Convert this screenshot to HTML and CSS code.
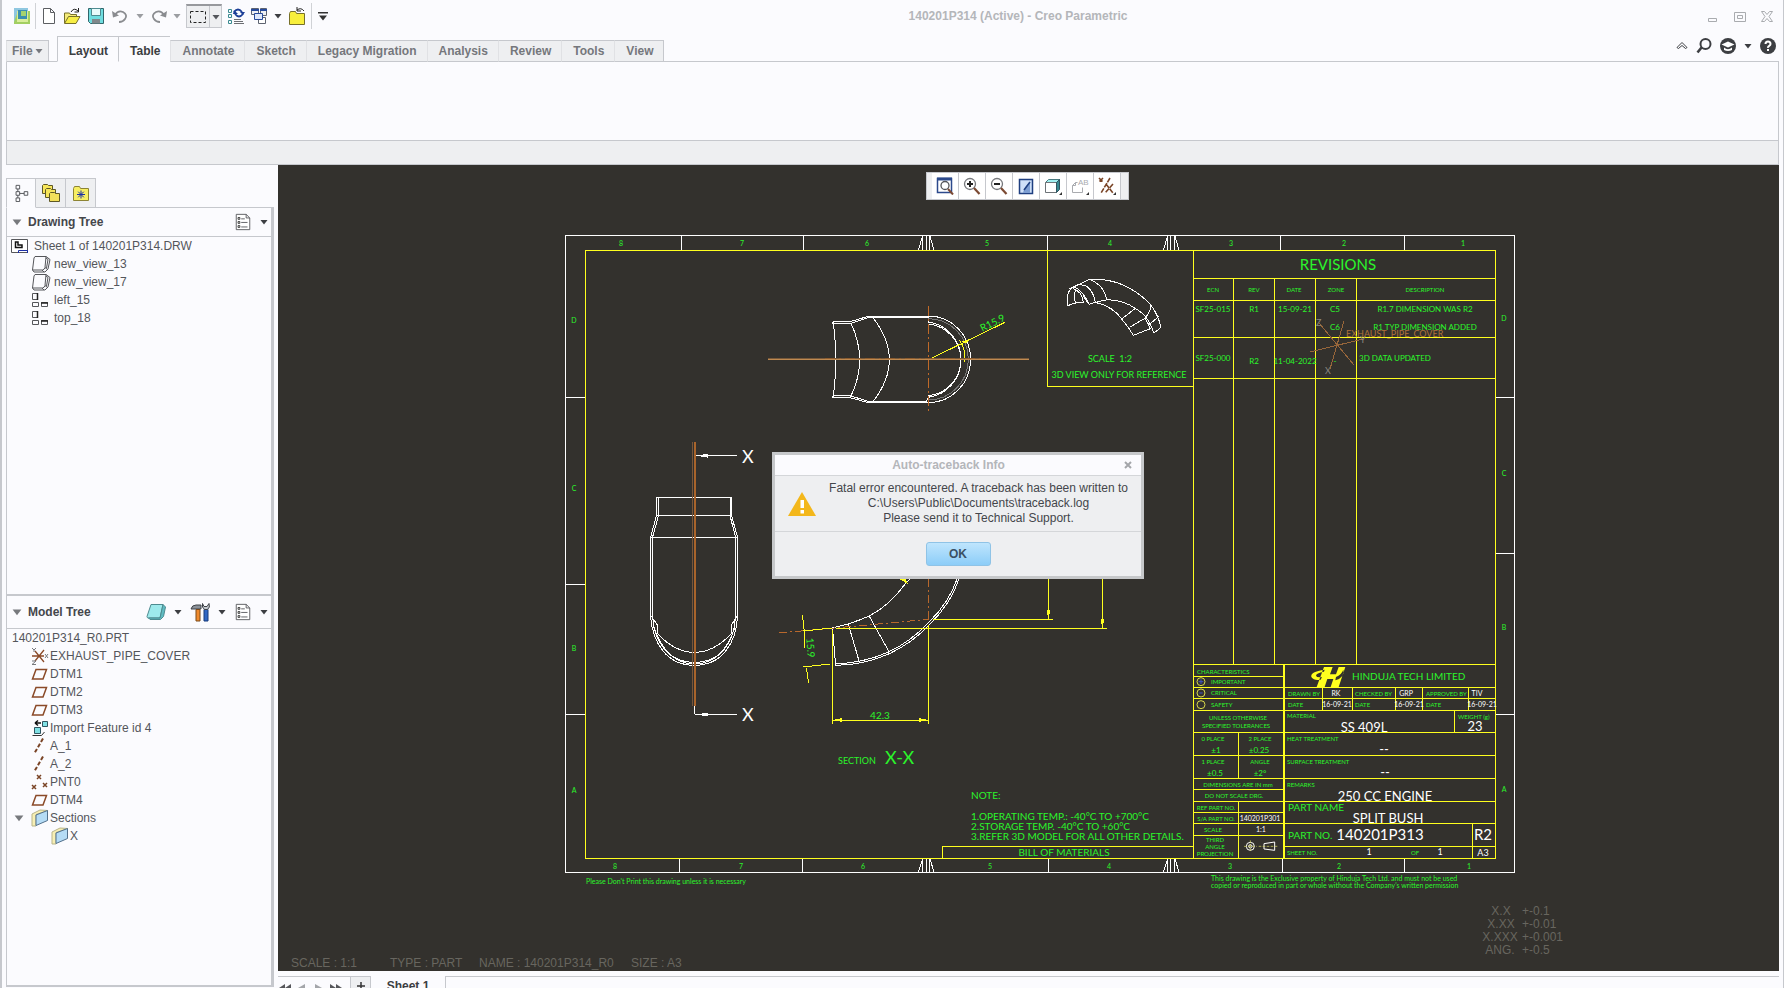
FILE: index.html
```html
<!DOCTYPE html>
<html lang="en">
<head>
<meta charset="utf-8">
<title>140201P314 (Active) - Creo Parametric</title>
<link rel="stylesheet" href="styles.css">
</head>
<body>
<svg class="defs" aria-hidden="true">
  <defs>
    <symbol id="caret" viewBox="0 0 8 8"><path d="M0.500 2h7L4 6.500z" fill="currentColor"/></symbol>
    <symbol id="plane" viewBox="0 0 18 18"><path d="M5 4.500h10.500L12 14H1.500z" fill="none" stroke="#8a4a28" stroke-width="1.500"/></symbol>
    <symbol id="axis" viewBox="0 0 18 18"><path d="M12 1.500L3 17" fill="none" stroke="#7a4426" stroke-width="2" stroke-dasharray="4 2"/></symbol>
    <symbol id="view3d" viewBox="0 0 20 18"><path d="M4 1.500h11l-1 11q-.5 2-2.500 2.500L1.500 15 3 3zM15 1.500l4 3-2 9.500-3 3H3l-1.500-2M14 12.500l2.500 2M11 15l2 2M15 3l2 1.500-1.500 8.500" fill="none" stroke="#55565a"/></symbol>
    <symbol id="views" viewBox="0 0 18 18"><path d="M1.500 2.500h5v6h-5zM1.500 11.500h6v4h-6zM10.500 11.500h6v4h-6z" fill="none" stroke="#55565a"/><path d="M6.500 2v7M10 12h7" stroke="#222" stroke-width="1.500"/></symbol>
    <symbol id="section" viewBox="0 0 18 18"><path d="M1 5l8-4 8 .5L5 5.500V17H1z" fill="#f7efb4" stroke="#b9b58a"/><path d="M5 6l11.500-4.500v10L5 16.500z" fill="#b5dcf6" stroke="#52708c"/></symbol>
    <symbol id="list" viewBox="0 0 18 20"><path d="M1.500 1.500h11l4 4v13h-15z" fill="#fff" stroke="#55565a"/><path d="M12.500 1.500v4h4M7 6.500h4M7 10.500h7M7 15.500h7" fill="none" stroke="#55565a"/><path d="M3.500 5h2v2h-2zM3.500 9.500h2v2h-2zM3.500 14h2v2h-2z" fill="none" stroke="#333"/></symbol>
    <symbol id="folder" viewBox="0 0 18 18"><path d="M1.500 4.500l1-2h5l1 2h8v12h-15z" fill="#f7ee62" stroke="#8d8434"/></symbol>
    <symbol id="lens" viewBox="0 0 18 18"><circle cx="7" cy="7" r="5.500" fill="#fff" stroke="#77797d" stroke-width="1.300"/><path d="M11 11l5.500 6" stroke="#7c4a33" stroke-width="2.200"/></symbol>
  </defs>
</svg>

<header class="titlebar">
  <div class="quickbar">
    <svg class="i16" viewBox="0 0 16 16"><path d="M0 0h14v14H0z" fill="#8fc7e0"/><path d="M0 14L4 3h12v13H0z" fill="#a3cf62"/><path d="M3 3h11v11H3z" fill="#d9ee9b"/><path d="M4 2h9v9H4z" fill="#3b8fb0"/><path d="M7 3h5v5H7z" fill="#a5d36e"/></svg>
    <span class="sep"></span>
    <button class="ib" aria-label="New"><svg class="i16" viewBox="0 0 16 16"><path d="M2.500.5h7l4 4v11h-11zM9.500.5v4h4" fill="#fff" stroke="#5c5e62"/></svg></button>
    <button class="ib w20" aria-label="Open"><svg class="i18" viewBox="0 0 18 18"><path d="M1.500 16V6h5l1 1.500h6V10" fill="#f5ec7a" stroke="#77702a"/><path d="M1.500 16.500l4-7H17l-4 7z" fill="#f7ee45" stroke="#77702a"/><path d="M8 5q3-5 7-1M15.500 1v4h-4" fill="none" stroke="#222"/></svg></button>
    <button class="ib w18" aria-label="Save"><svg class="i16" viewBox="0 0 16 16"><path d="M.5.5h15v15H2.500l-2-2z" fill="#6fdde0" stroke="#31666b"/><path d="M3.500.5h9v7h-9z" fill="#e8fbfb" stroke="#4e8b90"/><path d="M4 11h8v4.500H4z" fill="#80888b"/></svg></button>
    <button class="ib w20 dim" aria-label="Undo"><svg class="i18" viewBox="0 0 18 18"><path d="M4 8q3-5 8-3 5 3 2 7-2 3-6 3" fill="none" stroke="#8a8c90" stroke-width="1.800"/><path d="M1 4l1 6.500 6-2z" fill="#8a8c90"/></svg></button>
    <button class="ib w10 dim" aria-label="Undo list"><svg class="i8"><use href="#caret"/></svg></button>
    <button class="ib w18 dim" aria-label="Redo"><svg class="i18" viewBox="0 0 18 18"><path d="M14 8q-3-5-8-3-5 3-2 7 2 3 6 3" fill="none" stroke="#8a8c90" stroke-width="1.800"/><path d="M17 4l-1 6.500-6-2z" fill="#8a8c90"/></svg></button>
    <button class="ib w8 dim" aria-label="Redo list"><svg class="i8"><use href="#caret"/></svg></button>
    <button class="selectbox" aria-label="Selection"><svg class="i18" viewBox="0 0 18 18"><path d="M1.500 3.500h15v11h-15z" fill="none" stroke="#222" stroke-dasharray="3 2"/></svg><span class="selcaret"><svg class="i8"><use href="#caret"/></svg></span></button>
    <button class="ib w18" aria-label="Regenerate"><svg class="i18" viewBox="0 0 18 18"><path d="M1.500 2.500h3v3h-3zM1.500 7.500h3v3h-3zM1.500 13.500h3v3h-3z" fill="none" stroke="#3a8a90"/><path d="M7 5q4-5 8 0M16 7q-4 5-8 0" fill="none" stroke="#1d3f97" stroke-width="1.800"/><path d="M13 5h5l-2 3zM6 7h5L7 3z" fill="#1d3f97"/><path d="M7 12.500h7M7 14.500h9M7 16.500h10" stroke="#6c6e73"/></svg></button>
    <button class="ib w18" aria-label="Windows"><svg class="i18" viewBox="0 0 18 18"><path d="M1.500 1.500h7v6h-7zM10.500 1.500h6v7h-6z" fill="#eef0f4" stroke="#5d6370"/><path d="M1 3h8M10 3h7" stroke="#274a9c" stroke-width="2"/><path d="M8.500 10.500h7v6h-7z" fill="#fff" stroke="#5d6370"/><path d="M4.500 6.500h8v6h-8z" fill="#dfe8fa" stroke="#274a9c"/></svg></button>
    <button class="ib w10" aria-label="Window list"><svg class="i8"><use href="#caret"/></svg></button>
    <button class="ib w18" aria-label="Close"><svg class="i18" viewBox="0 0 18 18"><path d="M1.500 6.500l1-2h5l1 2h8v11h-15z" fill="#f8ef3d" stroke="#77702a"/><path d="M9 3q4-3 7 1M9 0v4h4" fill="none" stroke="#222"/></svg></button>
    <span class="sep"></span>
    <button class="ib w12" aria-label="Customize toolbar"><svg class="i10" viewBox="0 0 10 10"><path d="M0 1h10v1.500H0zM1 4.500h8L5 9.500z" fill="#333"/></svg></button>
  </div>
  <h1 class="title">140201P314 (Active) - Creo Parametric</h1>
  <div class="winbtns">
    <button class="ib w12" aria-label="Minimize"><svg class="i12" viewBox="0 0 12 12"><path d="M1.500 8.500h8v3h-8z" fill="none" stroke="#a9abaf"/></svg></button>
    <button class="ib w12" aria-label="Restore"><svg class="i12" viewBox="0 0 12 12"><path d="M.5 2.500h11v9H.5zM3.500 5.500h5v3h-5z" fill="none" stroke="#a9abaf"/></svg></button>
    <button class="ib w12" aria-label="Close window"><svg class="i12" viewBox="0 0 12 12"><path d="M.5 1.500h3L6 4.500l2.500-3h3L8 6.500l3.500 5h-3L6 8.500l-2.500 3h-3L4 6.500z" fill="none" stroke="#a9abaf"/></svg></button>
  </div>
</header>

<div class="tabrow">
  <nav class="tabs">
    <button class="tab file">File<svg class="i8"><use href="#caret"/></svg></button>
    <button class="tab on">Layout</button>
    <button class="tab on">Table</button>
    <button class="tab">Annotate</button>
    <button class="tab">Sketch</button>
    <button class="tab">Legacy Migration</button>
    <button class="tab">Analysis</button>
    <button class="tab">Review</button>
    <button class="tab">Tools</button>
    <button class="tab">View</button>
  </nav>
  <div class="helpers">
    <button class="ib w12" aria-label="Minimize ribbon"><svg class="i12" viewBox="0 0 12 12"><path d="M1 7.500L6 2.500l5 5-1.500 1L6 5.500l-3.500 3z" fill="none" stroke="#3c3e42"/></svg></button>
    <button class="ib w16" aria-label="Search"><svg class="i16" viewBox="0 0 16 16"><circle cx="9.500" cy="6" r="5" fill="none" stroke="#3c3e42" stroke-width="2"/><path d="M5.500 9.500L1.500 14.500" stroke="#3c3e42" stroke-width="2.600"/></svg></button>
    <button class="ib w16" aria-label="Learning"><svg class="i16" viewBox="0 0 16 16"><circle cx="8" cy="8" r="8" fill="#3c3e42"/><path d="M1.500 6.500L8 3.500l6.500 3L8 9.500zM4 9.500q4 3.500 8 0v2.500q-4 2-8 0z" fill="#fff"/></svg></button>
    <button class="ib w8" aria-label="Learning list"><svg class="i8"><use href="#caret"/></svg></button>
    <button class="ib w16" aria-label="Help"><svg class="i16" viewBox="0 0 16 16"><circle cx="8" cy="8" r="8" fill="#3c3e42"/><path d="M5.500 6q0-2.500 2.500-2.500T10.500 6q0 1-1.300 1.800T8 9.800" fill="none" stroke="#fff" stroke-width="2"/><path d="M7 11h2v2H7z" fill="#fff"/></svg></button>
  </div>
</div>
<section class="ribbon"><div class="groups"></div></section>

<main class="work">
  <aside class="side">
    <div class="navtabs">
      <button class="navtab on" aria-label="Tree"><svg class="i18" viewBox="0 0 18 20"><path d="M3.500 1.500h4v4h-4zM3.500 8.500h4v4h-4zM3.500 15.500h4v4h-4zM12.500 8.500h4v4h-4zM5.500 5.500v3M5.500 12.500v3M7.500 10.500h5" fill="none" stroke="#4a4c50"/></svg></button>
      <button class="navtab" aria-label="Folders"><svg class="i20" viewBox="0 0 20 20"><g fill="#f7e65a" stroke="#5e5826"><path d="M1.500 10.500v-8l1-1h4l1 1h4v8z"/><path d="M4.500 14.500v-8l1-1h4l1 1h4v8z"/><path d="M8.500 18.500v-8l1-1h4l1 1h4v8z" fill="#f3e05a"/></g></svg></button>
      <button class="navtab" aria-label="Favorites"><svg class="i18" viewBox="0 0 18 18"><use href="#folder"/><path d="M9 6.500v8M5 10.500h8M6.200 7.700l5.600 5.600M11.800 7.700l-5.600 5.600" stroke="#1c2fa8"/></svg></button>
    </div>
    <section class="pane">
      <header class="panehead"><svg class="i10 tw" viewBox="0 0 8 8"><use href="#caret"/></svg><h2>Drawing Tree</h2>
        <span class="tools"><button class="ib" aria-label="Settings"><svg class="i18"><use href="#list"/></svg></button><button class="ib w10" aria-label="Settings list"><svg class="i8"><use href="#caret"/></svg></button></span>
      </header>
      <ul class="tree drawing">
        <li><svg class="i18" viewBox="0 0 18 16"><path d="M.5 1.500h16v13H.5z" fill="#fff" stroke="#55565a"/><path d="M4.500 4v5.500H11V7H7V4z" fill="none" stroke="#111" stroke-width="1.500"/><path d="M7.500 15v-2.500h9V15" fill="none" stroke="#1c2fa8"/></svg><span>Sheet 1 of 140201P314.DRW</span></li>
        <li class="d1"><svg class="i20 h18"><use href="#view3d"/></svg>new_view_13</li>
        <li class="d1"><svg class="i20 h18"><use href="#view3d"/></svg>new_view_17</li>
        <li class="d1"><svg class="i20 h18"><use href="#views" x="-1"/></svg>left_15</li>
        <li class="d1"><svg class="i20 h18"><use href="#views" x="-1"/></svg>top_18</li>
      </ul>
    </section>
    <section class="pane model">
      <header class="panehead tall"><svg class="i10 tw" viewBox="0 0 8 8"><use href="#caret"/></svg><h2>Model Tree</h2>
        <span class="tools"><button class="ib" aria-label="Show"><svg class="i20" viewBox="0 0 20 18"><path d="M5 1.500h12L14 15H2.500Q1 15 1 13.500z" fill="#9eeaec" stroke="#4e8b90"/><path d="M17 1.500l2.500 2.500-2 9.500-3 3H4L2.500 15H14z" fill="#5fbcc2" stroke="#4e8b90"/></svg></button><button class="ib w10" aria-label="Show list"><svg class="i8"><use href="#caret"/></svg></button>
        <button class="ib" aria-label="Tree tools"><svg class="i20" viewBox="0 0 20 20"><path d="M1 7q1-4 5-4h5v4H9V7H5z" fill="#8c9299" stroke="#3f4348"/><path d="M6 7.500h4V19H6z" fill="#f08a2d" stroke="#7b4a1b"/><path d="M14 7.500h4V19h-4z" fill="#2f66c4" stroke="#173a7a"/><path d="M12.500 1.500q-1 4 2 6h3q3-2 1.500-6l-2 3h-3z" fill="#c5cad0" stroke="#3f4348"/></svg></button><button class="ib w10" aria-label="Tools list"><svg class="i8"><use href="#caret"/></svg></button>
        <button class="ib" aria-label="Settings"><svg class="i18"><use href="#list"/></svg></button><button class="ib w10" aria-label="Settings list"><svg class="i8"><use href="#caret"/></svg></button></span>
      </header>
      <ul class="tree">
        <li class="root">140201P314_R0.PRT</li>
        <li class="d1"><svg class="i18" viewBox="0 0 18 18"><path d="M1 9h12M4 4l9 11M13 3L4 14" stroke="#8a4a28" stroke-width="1.300"/><path d="M14 7l3 4M17 7l-3 4M1 1l2 2 2-2M3 3v2M1 14h4l-4 3.500h4" fill="none" stroke="#77797d"/></svg>EXHAUST_PIPE_COVER</li>
        <li class="d1"><svg class="i18"><use href="#plane"/></svg>DTM1</li>
        <li class="d1"><svg class="i18"><use href="#plane"/></svg>DTM2</li>
        <li class="d1"><svg class="i18"><use href="#plane"/></svg>DTM3</li>
        <li class="d1"><svg class="i18" viewBox="0 0 18 18"><path d="M11.500 2.500h5v5h-5zM3.500 8.500h6v6h-6z" fill="#7fe0e4" stroke="#2f5560"/><path d="M4 4h6M4 4l3-2.500M4 4l3 2.500" stroke="#111" stroke-width="1.500"/><path d="M1.500 16.500h9l3-3.500" fill="none" stroke="#333"/></svg>Import Feature id 4</li>
        <li class="d1"><svg class="i18"><use href="#axis"/></svg>A_1</li>
        <li class="d1"><svg class="i18"><use href="#axis"/></svg>A_2</li>
        <li class="d1"><svg class="i18" viewBox="0 0 18 18"><path d="M6 2l4 4M10 2L6 6M1 12l4 4M5 12l-4 4M12 10l4 4M16 10l-4 4" stroke="#7a4426" stroke-width="1.500"/></svg>PNT0</li>
        <li class="d1"><svg class="i18"><use href="#plane"/></svg>DTM4</li>
        <li class="open"><svg class="i10 tw" viewBox="0 0 8 8"><use href="#caret"/></svg><svg class="i18"><use href="#section"/></svg>Sections</li>
        <li class="d2"><svg class="i18"><use href="#section"/></svg>X</li>
      </ul>
    </section>
  </aside>

  <div class="stage">
    <div class="canvas">
      <svg class="sheet" viewBox="278 165 1501 806" role="img" aria-label="Drawing sheet 140201P313">
        <g class="w">
          <path d="M565.500 235.500H1514.500V872.500H565.500z"/>
          <path d="M681.500 236v14M803.500 236v14M1047.500 236v14M1280.500 236v14M1404.500 236v14M679.500 859v14M802.500 859v14M1048.500 859v14M1282.500 859v14M1404.500 859v14"/>
          <path d="M566 397.500h19M566 584.500h19M566 714.500h19M1496 397.500h19M1496 553.500h19M1496 714.500h19"/>
          <path d="M922.500 236v14M926.500 236v14M929.500 236v14M922.500 236l-4 14M930 236l4 14M1167.500 236v14M1170.500 236v14M1174.500 236v14M1167.500 236l-4 14M1175 236l4 14"/>
          <path d="M922.500 859v13M926.500 859v13M929.500 859v13M922.500 859l-4 13M930 859l4 13M1167.500 859v13M1170.500 859v13M1174.500 859v13M1167.500 859l-4 13M1175 859l4 13"/>
        </g>
        <g class="y">
          <path d="M585.500 250.500H1495.500V858.500H585.500zM1193.500 250V858M1047.500 250V386.500H1193.500"/>
          <path d="M1193 278.500H1495M1193 300.500H1495M1193 337.500H1495M1193 378.500H1495M1233.500 278V664M1274.500 278V664M1315.500 278V664M1356.500 278V664"/>
          <path d="M942.500 858V846.500H1193M1193 664.500H1495M1193 676.500h91M1193 687.500H1495M1193 698.500H1495M1193 710.500H1495M1193 732.500H1495M1193 755.500H1495M1193 778.500H1495M1193 789.500h91M1193 801.500H1495M1193 812.500h91M1193 823.500H1495M1193 835.500h91M1284 846.500H1495"/>
          <path d="M1238.500 732v46M1238.500 801v57M1322.500 687v23M1352.500 687v23M1395.500 687v23M1422.500 687v23M1468.500 687v23M1454.500 710v22M1472.500 823v35"/>
          <path d="M1284 664V858" stroke-width="2"/>
        </g>

        <g class="w" transform="translate(1030 225) scale(.33333)">
          <path d="M112 243Q108 198 128 188Q150 184 178 238M112 243Q124 236 137 234L160 233M137 234Q130 215 137 195M128 190Q158 200 160 233M160 210Q165 225 178 238M118 192L178 163Q262 158 330 210Q350 225 363 240Q390 280 392 308L371 325M145 180Q185 175 196 232M178 163Q222 180 230 224M178 238L196 232L232 224Q280 225 316 250Q340 265 350 280Q365 300 371 325M196 232Q250 245 275 282Q295 305 310 331L361 311Q355 295 345 280M275 282L316 250M300 306L345 280Q365 255 363 240M358 298L386 275"/>
        </g>
        <g class="w" transform="translate(560 225) scale(.33333)">
          <path d="M818 290H870L925 274H1105M818 296H870L925 278H1105V292H1115M818 290V296M818 518H870L925 533H1105M818 512H870L925 529H1100L1105 516H1115M818 512V518"/>
          <path d="M820 290Q834 404 820 517M872 293Q926 404 872 515M938 277Q1038 404 938 531"/>
          <path d="M1105 273A127 130 0 0 1 1105 533M1105 297A108 108 0 0 1 1105 512M1105 291A113 114 0 0 1 1105 517"/>
          <path d="M1105 281A120 122 0 0 1 1105 525" stroke="#777"/>
          <path d="M1198 345Q1218 372 1215 410M1108 403L1335 292" stroke="#ffff1e"/>
          <path d="M1200 352L1234 340L1222 353z" stroke="none" fill="#ffff1e"/>
          <path d="M624 401H1408" stroke="#77593a"/><path d="M624 405H1408" stroke="#c08a50"/><path d="M795 402H1262" stroke="#8d5c2e" stroke-dasharray="10 4 2 4"/>
          <path d="M1106 243V568" stroke="#c06a28" stroke-dasharray="10 3 2 3"/>
        </g>
        <g class="w" transform="translate(560 430) scale(.39542 .33333)">
          <path d="M244 202H434V257L449 322V560C445 640 410 706 340 706C270 706 235 640 229 560V322L244 257zM249 202V257L234 322V560C240 640 275 697 340 697C405 697 440 640 444 560V322L430 257V202M244 257H434M229 324H449"/>
          <path d="M229 555L246 585V610Q290 667 340 667Q390 667 434 610V585L449 555M236 590Q270 702 340 702Q412 702 443 590"/>
          <path d="M689 593L697 706Q770 705 833 671Q890 640 936 582Q989 520 1009 447M697 702Q770 698 829 667Q886 636 932 578Q985 516 1004 447M689 593Q730 585 782 558Q835 525 870 466L885 447M729 582L757 696M782 558L833 667"/>
          <path d="M340 77H448M340 77V110"/><path d="M343 77L374 71V83z" fill="#fff" stroke="none"/>
          <path d="M555 609L932 568M932 447V568" stroke="#b8682c" stroke-dasharray="8 3 2 3"/>
        </g>
        <g class="w"><path d="M694.500 714.500H737M694.500 706V714"/><path d="M696 714.500l12-2v4z" fill="#fff" stroke="none"/></g>
        <path class="ln" d="M692.500 442V706" stroke="#76563c"/><path class="ln" d="M695 442V706" stroke="#a9642b" stroke-width="2"/>
        <g class="y">
          <path d="M832.500 630V724M928.500 625V724M832 720.500H929M933 619.500H1053M1048.500 579V619M836 628.500H1107M1102.500 579V628M802.500 615l2 18M806.500 668l2 15M804 632l1 16M803 631l29-3M803 667l27-3"/>
          <path d="M833 720l9-2v4zM928 720l-9-2v4zM1048.500 619l-2-9h4zM1102.500 628l-2-9h4zM896 577l12 7-4-9z" fill="#ffff1e" stroke="none"/>
        </g>

        <g class="g s7 m">
          <text x="621" y="246">8</text><text x="742" y="246">7</text><text x="867" y="246">6</text><text x="987" y="246">5</text><text x="1110" y="246">4</text><text x="1231" y="246">3</text><text x="1344" y="246">2</text><text x="1463" y="246">1</text>
          <text x="615" y="869">8</text><text x="741" y="869">7</text><text x="863" y="869">6</text><text x="990" y="869">5</text><text x="1109" y="869">4</text><text x="1230" y="869">3</text><text x="1339" y="869">2</text><text x="1469" y="869">1</text>
          <text x="574" y="323">D</text><text x="574" y="491">C</text><text x="574" y="651">B</text><text x="574" y="793">A</text>
          <text x="1504" y="321">D</text><text x="1504" y="476">C</text><text x="1504" y="630">B</text><text x="1504" y="792">A</text>
        </g>
        <g class="g s6 m"><text x="1213" y="292">ECN</text><text x="1254" y="292">REV</text><text x="1294" y="292">DATE</text><text x="1336" y="292">ZONE</text><text x="1425" y="292">DESCRIPTION</text></g>
        <g class="g m">
          <text class="s15" x="1338" y="270">REVISIONS</text>
          <g class="s8"><text x="1213" y="312">SF25-015</text><text x="1254" y="312">R1</text><text x="1295" y="312">15-09-21</text><text x="1335" y="312">C5</text><text x="1425" y="312">R1.7 DIMENSION WAS R2</text>
          <text x="1335" y="330">C6</text><text x="1425" y="330">R1 TYP DIMENSION ADDED</text>
          <text x="1213" y="361">SF25-000</text><text x="1254" y="364">R2</text><text x="1295" y="364">11-04-2022</text><text x="1335" y="364">-</text><text x="1395" y="361">3D DATA UPDATED</text></g>
          <g class="s9"><text x="1110" y="362" xml:space="preserve">SCALE  1:2</text><text x="1119" y="378">3D VIEW ONLY FOR REFERENCE</text></g>
          <g class="s10"><text x="1064" y="856">BILL OF MATERIALS</text><text x="880" y="719">42.3</text>
          <text transform="translate(994 326) rotate(-26)">R15.9</text><text transform="translate(807 648) rotate(85)">15.9</text></g>
        </g>
        <g class="ln" stroke="#98663a"><path d="M1319 323L1354 365M1344 321L1330 369M1310 352L1363 339"/></g>
        <g class="s9 gray"><text x="1316" y="326">Z</text><text x="1360" y="343">Y</text><text x="1325" y="374">X</text></g>
        <text class="s9 brown" x="1346" y="337">EXHAUST_PIPE_COVER</text>
        <g class="s18 wt"><text x="742" y="463">X</text><text x="742" y="721">X</text></g>
        <g class="g"><text class="s9" x="838" y="764">SECTION</text><text class="s18" x="885" y="764">X-X</text>
          <g class="s10"><text x="971" y="799">NOTE:</text><text x="971" y="820">1.OPERATING TEMP.: -40°C TO +700°C</text><text x="971" y="830">2.STORAGE TEMP. -40°C TO +60°C</text><text x="971" y="840">3.REFER 3D MODEL FOR ALL OTHER DETAILS.</text></g>
          <g class="s7"><text x="586" y="884">Please Don't Print this drawing unless it is necessary</text>
          <text x="1211" y="881">This drawing is the Exclusive property of Hinduja Tech Ltd. and must not be used</text>
          <text x="1211" y="888">copied or reproduced in part or whole without the Company's written permission</text></g>
        </g>
        <g class="g s6">
          <text x="1197" y="674">CHARACTERISTICS</text><text x="1211" y="684">IMPORTANT</text><text x="1211" y="695">CRITICAL</text><text x="1211" y="707">SAFETY</text>
          <text x="1288" y="696">DRAWN BY</text><text x="1355" y="696">CHECKED BY</text><text x="1426" y="696">APPROVED BY</text><text x="1288" y="707">DATE</text><text x="1355" y="707">DATE</text><text x="1426" y="707">DATE</text>
          <text x="1287" y="718">MATERIAL</text><text x="1458" y="719">WEIGHT (g)</text><text x="1287" y="741">HEAT TREATMENT</text><text x="1287" y="764">SURFACE TREATMENT</text><text x="1287" y="787">REMARKS</text><text x="1287" y="855">SHEET NO.</text><text x="1411" y="855">OF</text>
          <g class="m"><text x="1238" y="720">UNLESS OTHERWISE</text><text x="1236" y="728">SPECIFIED TOLERANCES</text><text x="1213" y="741">0 PLACE</text><text x="1260" y="741">2 PLACE</text><text x="1213" y="764">1 PLACE</text><text x="1260" y="764">ANGLE</text>
          <text x="1238" y="787">DIMENSIONS ARE IN mm</text><text x="1234" y="798">DO NOT SCALE DRG.</text><text x="1216" y="810">REF PART NO.</text><text x="1216" y="821">S/A PART NO.</text><text x="1213" y="832">SCALE</text><text x="1215" y="842">THIRD</text><text x="1215" y="849">ANGLE</text><text x="1215" y="856">PROJECTION</text></g>
          <g class="m s8"><text x="1216" y="753">±1</text><text x="1259" y="753">±0.25</text><text x="1215" y="776">±0.5</text><text x="1260" y="776">±2°</text></g>
        </g>
        <g class="g s10"><text x="1352" y="680">HINDUJA TECH LIMITED</text><text x="1288" y="811">PART NAME</text><text x="1288" y="839">PART NO.</text></g>
        <g class="wt m">
          <g class="s7"><text x="1336" y="696">RK</text><text x="1406" y="696">GRP</text><text x="1477" y="696">TIV</text><text x="1337" y="707">16-09-21</text><text x="1409" y="707">16-09-21</text><text x="1482" y="707">16-09-21</text><text x="1260" y="821">140201P301</text><text x="1261" y="832">1:1</text></g>
          <g class="s13"><text x="1364" y="732">SS 409L</text><text x="1475" y="731">23</text><text x="1384" y="754">--</text><text x="1385" y="777">--</text><text x="1385" y="801">250 CC ENGINE</text><text x="1388" y="823">SPLIT BUSH</text></g>
          <g class="s15"><text x="1380" y="840">140201P313</text><text x="1483" y="840">R2</text></g>
          <g class="s9"><text x="1369" y="855">1</text><text x="1440" y="855">1</text><text x="1483" y="856">A3</text></g>
        </g>
        <g transform="translate(1170 655) scale(.33333)">
          <path d="M462 36h26l-8 22h18l8-22h20l-20 60h-24l8-24h-18l-8 24h-24zM464 44Q420 50 424 66Q432 78 452 74L456 66Q440 68 438 62Q438 54 462 50zM496 76Q526 66 520 44Q514 60 498 66z" fill="#ffff1e"/>
          <g fill="none" stroke="#d8d84a" stroke-width="3"><circle cx="93" cy="80" r="12"/><circle cx="93" cy="114" r="12"/><circle cx="93" cy="149" r="12"/></g>
          <path d="M86 80h14M93 73v14M88 114h10" stroke="#3f54c8" stroke-width="3"/>
          <g fill="none" stroke="#fff" stroke-width="3"><circle cx="241" cy="574" r="12"/><circle cx="241" cy="574" r="5"/><path d="M282 566L314 561V586L282 582z"/></g>
          <path d="M222 574h38M241 556v36M266 574h56" stroke="#e6e66a" stroke-width="2" stroke-dasharray="8 4"/>
        </g>
        <g class="note"><text x="291" y="967">SCALE : 1:1</text><text x="390" y="967">TYPE : PART</text><text x="479" y="967">NAME : 140201P314_R0</text><text x="631" y="967">SIZE : A3</text>
          <g class="m"><text x="1501" y="915">X.X</text><text x="1501" y="928">X.XX</text><text x="1500" y="941">X.XXX</text><text x="1500" y="954">ANG.</text></g>
          <text x="1522" y="915">+-0.1</text><text x="1522" y="928">+-0.01</text><text x="1522" y="941">+-0.001</text><text x="1522" y="954">+-0.5</text></g>
      </svg>

      <div class="viewbar">
        <button class="vb" aria-label="Refit"><svg class="i18" viewBox="0 0 18 18"><path d="M1.500 1.500h14v14h-14z" fill="#fff" stroke="#2c4a8c" stroke-width="1.500"/><path d="M1 2h15" stroke="#2c4a8c" stroke-width="3"/><circle cx="9" cy="8.500" r="4" fill="#fff" stroke="#55565a" stroke-width="1.300"/><path d="M12 12l5 5.500" stroke="#7c4a33" stroke-width="2"/></svg></button>
        <button class="vb" aria-label="Zoom in"><svg class="i18" viewBox="0 0 18 18"><use href="#lens"/><path d="M4 7h6M7 4v6" stroke="#222" stroke-width="2"/></svg></button>
        <button class="vb" aria-label="Zoom out"><svg class="i18" viewBox="0 0 18 18"><use href="#lens"/><path d="M4 7h6" stroke="#222" stroke-width="2"/></svg></button>
        <button class="vb" aria-label="Repaint"><svg class="i18" viewBox="0 0 18 18"><path d="M2.500 2.500h13v14h-13z" fill="#cfe0f8" stroke="#1f3f80" stroke-width="1.500"/><path d="M6 16q1-6 7-11v11z" fill="#7d9ed2"/><path d="M7 13l6-8" stroke="#1f3f80" stroke-width="1.500"/></svg></button>
        <button class="vb" aria-label="Display style"><svg class="i18" viewBox="0 0 18 18"><path d="M1.500 5.500l3-3h11l-3 3z" fill="#9feff0" stroke="#487a80"/><path d="M1.500 5.500h11v10h-11z" fill="#fff" stroke="#6d7377"/><path d="M12.500 5.500l3-3v10l-3 3z" fill="#37888f" stroke="#2f5560"/><path d="M18 15v3h-3z" fill="#333"/></svg></button>
        <button class="vb" aria-label="Annotation display"><svg class="i18" viewBox="0 0 18 18"><path d="M6.500 5.500h-2l-3 3v7h10v-5M1.500 8.500h3v-3" fill="none" stroke="#a9abaf"/><text x="7" y="8" class="ab">AB</text><path d="M18 15v3h-3z" fill="#333"/></svg></button>
        <button class="vb" aria-label="Datum display"><svg class="i18" viewBox="0 0 18 18"><path d="M1 1l4 4M5 1L1 5M12 1L3 16M8 7l7 9M15 7l-8 9" fill="none" stroke="#7a4426" stroke-width="1.600" stroke-dasharray="5 1"/><path d="M18 15v3h-3z" fill="#333"/></svg></button>
      </div>

      <div class="dialog" role="alertdialog" aria-labelledby="dlg-title">
        <header class="dlghead"><h2 id="dlg-title">Auto-traceback Info</h2><button class="ib w12" aria-label="Close dialog"><svg class="i8" viewBox="0 0 8 8"><path d="M1 1l6 6M7 1L1 7" stroke="#a4a6aa" stroke-width="2"/></svg></button></header>
        <div class="dlgbody">
          <svg class="warn" viewBox="0 0 28 24"><path d="M14 0L28 24H0z" fill="#f3b71b"/><path d="M12.500 8h3.500v8h-3.500zM12.500 18h3.500v3.500h-3.500z" fill="#fff"/></svg>
          <p>Fatal error encountered. A traceback has been written to<br>C:\Users\Public\Documents\traceback.log<br>Please send it to Technical Support.</p>
        </div>
        <div class="dlgfoot"><button class="ok">OK</button></div>
      </div>
    </div>
    <footer class="sheets">
      <div class="pager">
        <button class="pg" aria-label="First sheet"><svg class="i12" viewBox="0 0 12 8"><path d="M6 0v8L0 4zM12 0v8L6 4z" fill="#55565a"/></svg></button>
        <button class="pg" aria-label="Previous sheet"><svg class="i12" viewBox="0 0 12 8"><path d="M9 0v8L2 4z" fill="#a4a6aa"/></svg></button>
        <button class="pg" aria-label="Next sheet"><svg class="i12" viewBox="0 0 12 8"><path d="M2 0v8l7-4z" fill="#a4a6aa"/></svg></button>
        <button class="pg" aria-label="Last sheet"><svg class="i12" viewBox="0 0 12 8"><path d="M0 0v8l6-4zM6 0v8l6-4z" fill="#55565a"/></svg></button>
      </div>
      <button class="add" aria-label="New sheet"><svg class="i8" viewBox="0 0 8 8"><path d="M0 4h8M4 0v8" stroke="#333" stroke-width="1.500"/></svg></button>
      <button class="sheettab">Sheet 1</button>
      <div class="rest"></div>
    </footer>
  </div>
</main>
</body>
</html>
```
FILE: styles.css
```css
* { box-sizing: border-box; }
html, body { height: 100%; }
body {
  margin: 0;
  display: flex;
  flex-direction: column;
  overflow: hidden;
  background: #fbfbfe;
  border-left: 2px solid #c6c8cd;
  border-right: 1px solid #c6c8cd;
  color: #54565b;
  font: 12px/15px "Liberation Sans", Arial, sans-serif;
}
h1, h2, p, ul { margin: 0; padding: 0; font-size: 12px; }
button { font: inherit; color: inherit; background: none; border: 0; padding: 0; }
svg { display: block; flex: none; }
.defs { position: absolute; width: 0; height: 0; }
.i8 { width: 8px; height: 8px; }
.i10 { width: 10px; height: 10px; }
.i12 { width: 12px; height: 12px; }
.i16 { width: 16px; height: 16px; }
.i18 { width: 18px; height: 18px; }
.i20 { width: 20px; height: 20px; }
.h18 { height: 18px; }
.w8 { width: 8px; }
.w10 { width: 10px; }
.w12 { width: 12px; }
.w16 { width: 16px; }
.w18 { width: 18px; }
.w20 { width: 20px; }
.ib { display: flex; align-items: center; justify-content: center; color: #3c3e42; }
.dim { color: #9b9da1; }

.titlebar { display: flex; align-items: center; height: 32px; padding: 0 10px 0 12px; }
.quickbar { display: flex; align-items: center; gap: 5px; }
.sep { width: 1px; height: 26px; background: #d0d2d6; }
.selectbox { display: flex; align-items: center; justify-content: space-between; width: 36px; height: 24px; padding-left: 2px; background: #eeeff1; border: 1px solid #c6c8cd; border-top: 2px solid #97999d; }
.selcaret { display: flex; align-items: center; justify-content: center; width: 12px; height: 21px; border-left: 1px solid #c6c8cd; }
.title { flex: 1; text-align: center; color: #b4b6ba; font-weight: bold; }
.winbtns { display: flex; justify-content: flex-end; gap: 15px; }

.tabrow { display: flex; justify-content: space-between; height: 29px; padding: 0 7px 0 4px; }
.tabs { display: flex; align-items: flex-end; margin-bottom: -1px; z-index: 1; }
.tab { height: 22px; padding: 0 10px 0 11px; background: #eeeff1; border: 1px solid #c6c8cd; border-left-color: #e0e1e4; border-right-width: 0; color: #75777c; font-weight: bold; }
.tab:last-child { border-right-width: 1px; }
.file { display: flex; align-items: center; gap: 2px; margin-right: 8px; padding: 0 5px; border-right-width: 1px; }
.tab.on { height: 26px; padding-top: 4px; background: #fbfbfe; border-color: #c6c8cd; border-bottom-color: #fbfbfe; color: #3c3e42; }
.helpers { display: flex; align-items: center; gap: 8px; padding-bottom: 2px; }

.ribbon { display: flex; flex-direction: column; height: 104px; margin: 0 4px; border: 1px solid #c6c8cd; background: #eeeff1; }
.groups { height: 79px; background: #fbfbfe; border-bottom: 1px solid #c6c8cd; }

.work { flex: 1; display: flex; min-height: 0; }
.side { width: 276px; padding: 13px 4px 1px; display: flex; flex-direction: column; }
.navtabs { display: flex; height: 30px; margin-bottom: -1px; z-index: 1; }
.navtab { display: flex; align-items: center; justify-content: center; width: 30px; background: #eeeff1; border: 1px solid #c6c8cd; border-left-width: 0; }
.navtab.on { background: #fbfbfe; border-left-width: 1px; border-bottom-color: #fbfbfe; }
.pane { height: 388px; border: 1px solid #c6c8cd; border-right-width: 3px; }
.pane.model { flex: 1; height: auto; border-bottom-width: 2px; }
.panehead { display: flex; align-items: center; gap: 6px; height: 29px; padding: 0 2px 0 5px; border-bottom: 1px solid #c6c8cd; }
.panehead.tall { height: 33px; }
.panehead h2 { color: #44464b; }
.tw { color: #77797d; }
.tools { display: flex; gap: 7px; margin-left: auto; }
.tree { list-style: none; }
.tree li { display: flex; align-items: center; gap: 1px; height: 18px; padding-left: 5px; white-space: nowrap; }
.tree.drawing li { gap: 3px; }
.tree.drawing li:first-child { gap: 5px; padding-left: 4px; }
.tree.drawing .d1, .tree .d1 { padding-left: 24px; }
.tree .d2 { padding-left: 44px; }
.tree .open { padding-left: 7px; }
.open .tw { margin-right: 6px; }

.stage { flex: 1; display: flex; flex-direction: column; min-width: 0; padding-right: 4px; }
.canvas { position: relative; flex: 1; min-height: 0; background: #33312d; }
.sheet { width: 100%; height: 100%; }
.sheet text { font-family: Lato, "Liberation Sans", sans-serif; }
.w, .y, .ln { fill: none; shape-rendering: crispEdges; }
.w { stroke: #fff; }
.y { stroke: #ffff1e; }
.w path { vector-effect: non-scaling-stroke; }
.g { fill: #2bf52b; }
.wt { fill: #fff; }
.gray { fill: #8a8780; }
.brown { fill: #b0713a; }
.m { text-anchor: middle; }
.s6 { font-size: 6px; }
.s7 { font-size: 7px; }
.s8 { font-size: 8px; }
.s9 { font-size: 9px; }
.s10 { font-size: 10px; }
.s13 { font-size: 13px; }
.s15 { font-size: 15px; }
.s18 { font-size: 18px; }
.sheet .note text { fill: #68665f; font: 12px "Liberation Sans", sans-serif; }
.ab { fill: #a9abaf; font-size: 8px; }

.viewbar { position: absolute; top: 7px; left: 648px; display: flex; height: 28px; padding: 0 7px 0 5px; background: #eeeff1; border: 1px solid #c6c8cd; }
.vb { display: flex; align-items: center; justify-content: center; width: 27px; background: #fff; border-right: 1px solid #c6c8cd; }

.dialog { position: absolute; top: 287px; left: 494px; width: 372px; background: #eeeff1; border: 3px solid #c6c8ca; }
.dlghead { display: flex; align-items: center; height: 21px; padding-right: 7px; background: #fbfbfe; border-bottom: 1px solid #d4d6d9; }
.dlghead h2 { flex: 1; text-align: center; color: #b4b6ba; }
.dlgbody { display: flex; align-items: center; height: 56px; padding-left: 13px; border-bottom: 1px solid #d4d6d9; }
.dlgbody p { flex: 1; text-align: center; color: #44464b; white-space: nowrap; }
.warn { width: 28px; height: 24px; }
.dlgfoot { display: flex; align-items: center; justify-content: center; height: 44px; }
.ok { width: 65px; height: 24px; border: 1px solid #8fc3e6; border-radius: 3px; background: linear-gradient(#bfe5fd, #8ccdf8); color: #3b5063; font-weight: bold; }

.sheets { display: flex; height: 17px; overflow: hidden; padding-top: 5px; }
.pager { display: flex; gap: 5px; padding: 5px 8px 0 1px; border-top: 1px solid #c6c8cd; }
.pg { width: 12px; height: 12px; }
.pg svg { height: 8px; }
.add { display: flex; justify-content: center; flex: none; width: 21px; height: 20px; padding-top: 5px; border: 1px solid #c6c8cd; background: #eeeff1; }
.sheettab { flex: none; width: 74px; height: 20px; color: #3c3e42; font-weight: bold; }
.rest { flex: 1; height: 20px; border: 1px solid #c6c8cd; border-right: 0; }
```
